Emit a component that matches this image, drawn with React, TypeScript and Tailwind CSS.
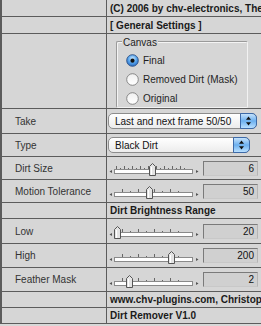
import type { ReactNode } from 'react';

const font = { fontFamily: '"Liberation Sans", Arial, sans-serif' };

interface RowProps {
  label?: string;
  h: string;
  children?: ReactNode;
}

const Row = ({ label, h, children }: RowProps) => (
  <div className={`flex ${h} border-b border-[#5c5c5c]`}>
    <div className="flex w-[105px] shrink-0 items-center border-r border-[#5c5c5c] pl-[13px] text-[10px] text-[#333]">
      {label}
    </div>
    <div className="flex min-w-0 flex-1 items-center">{children}</div>
  </div>
);

const HeaderRow = ({ text, h }: { text: string; h: string }) => (
  <Row h={h}>
    <span className="whitespace-nowrap pl-[3px] text-[10px] font-bold text-[#1a1a1a]">{text}</span>
  </Row>
);

const Radio = ({ checked, label }: { checked?: boolean; label: string }) => (
  <div className="flex items-center gap-[4px]">
    <svg width="13" height="13" viewBox="0 0 13 13">
      <defs>
        <radialGradient id="rb" cx="50%" cy="35%" r="70%">
          <stop offset="0" stopColor="#d4ecff" />
          <stop offset="0.5" stopColor="#5aa7ee" />
          <stop offset="1" stopColor="#1f5fb8" />
        </radialGradient>
        <linearGradient id="rw" x1="0" y1="0" x2="0" y2="1">
          <stop offset="0" stopColor="#f0f0f0" />
          <stop offset="1" stopColor="#ffffff" />
        </linearGradient>
      </defs>
      <circle
        cx="6.5"
        cy="6.5"
        r="5.8"
        fill={checked ? 'url(#rb)' : 'url(#rw)'}
        stroke={checked ? '#2a4f86' : '#7e7e7e'}
        strokeWidth="0.9"
      />
      {checked && <circle cx="6.5" cy="6.7" r="2.1" fill="#111" />}
    </svg>
    <span className="text-[10px] text-[#1e1e1e]">{label}</span>
  </div>
);

const Popup = ({ text, w }: { text: string; w: string }) => (
  <div
    className={`relative flex h-[16px] ${w} items-center rounded-[5px] border border-[#8c8c8c] bg-gradient-to-b from-white to-[#ececec] pl-[6px] text-[10px] text-[#111]`}
  >
    <span className="whitespace-nowrap">{text}</span>
    <div className="absolute top-[-1px] right-[-1px] flex h-[16px] w-[17px] items-center justify-center rounded-r-[5px] border border-[#3d6aa8] bg-gradient-to-b from-[#c5e2fb] via-[#6cb0ef] to-[#b9e0ff]">
      <svg width="7" height="10" viewBox="0 0 7 10">
        <path d="M3.5 0.5 L6 3.8 L1 3.8 Z" fill="#111" />
        <path d="M3.5 9.5 L6 6.2 L1 6.2 Z" fill="#111" />
      </svg>
    </div>
  </div>
);

const Slider = ({ pos, ticks }: { pos: number; ticks: number[] }) => (
  <svg width="95" height="18" viewBox="0 0 95 18" className="shrink-0">
    <path d="M4 11 L1.5 12.5 L4 14 Z" fill="#555" />
    {ticks.map((t, i) => (
      <line
        key={i}
        x1={t + 0.5}
        x2={t + 0.5}
        y1={i % 2 === 0 ? 7 : 9}
        y2="11"
        stroke="#666"
        strokeWidth="1"
      />
    ))}
    <rect x="6.5" y="10.5" width="78" height="4" fill="#fff" stroke="#8a8a8a" strokeWidth="1" />
    <path d="M88 11 L90.5 12.5 L88 14 Z" fill="#555" />
    <path
      d={`M${pos + 0.5} 4.5 L${pos + 3.5} 7.5 L${pos + 3.5} 16.5 L${pos - 2.5} 16.5 L${pos - 2.5} 7.5 Z`}
      fill="#e4e4e4"
      stroke="#555"
      strokeWidth="1"
    />
    <line x1={pos - 0.5} y1="8" x2={pos - 0.5} y2="16" stroke="#fff" strokeWidth="1" />
  </svg>
);

const NumField = ({ value }: { value: string }) => (
  <div className="flex h-[15px] w-[55px] items-center justify-end border border-t-[#7a7a7a] border-l-[#7a7a7a] border-r-[#b5b5b5] border-b-[#c8c8c8] bg-[#d0d0d0] pr-[3px] text-[10px] text-[#111]">
    {value}
  </div>
);

const SliderRow = ({
  label,
  h,
  pos,
  ticks,
  value,
}: {
  label: string;
  h: string;
  pos: number;
  ticks: number[];
  value: string;
}) => (
  <Row label={label} h={h}>
    <div className="flex items-center pl-[1px]">
      <Slider pos={pos} ticks={ticks} />
      <NumField value={value} />
    </div>
  </Row>
);

const fineTicks = [8, 12, 16, 20, 24, 28, 32, 36, 40, 44, 48, 52, 56, 60, 64, 68, 72, 76];
const wideTicks = [14, 22, 30, 38, 46, 54, 62, 70];

export default function App() {
  return (
    <div className="h-[326px] w-[261px] overflow-hidden bg-[#d8d8d8]" style={font}>
      <div className="border-l-2 border-[#5c5c5c] bg-[#d6d6d6]">
        <HeaderRow h="h-[17px]" text="(C) 2006 by chv-electronics, The Netherlands" />
        <HeaderRow h="h-[17px]" text="[ General Settings ]" />
        <Row h="h-[75px]">
          <div className="relative ml-[9px] mt-[6px] h-[67px] w-[132px] rounded-[2px] border border-t-[#9a9a9a] border-l-[#9a9a9a] border-r-[#f2f2f2] border-b-[#f2f2f2] shadow-[inset_1px_1px_0_#f4f4f4]">
            <span className="absolute top-[-7px] left-[5px] bg-[#d6d6d6] px-[1px] text-[10px] text-[#1e1e1e]">
              Canvas
            </span>
            <div className="flex flex-col gap-[4px] pt-[11px] pl-[9px]">
              <Radio checked label="Final" />
              <Radio label="Removed Dirt (Mask)" />
              <Radio label="Original" />
            </div>
          </div>
        </Row>
        <Row label="Take" h="h-[25px]">
          <div className="pl-[1px]">
            <Popup text="Last and next frame 50/50" w="w-[149px]" />
          </div>
        </Row>
        <Row label="Type" h="h-[23px]">
          <div className="pl-[1px]">
            <Popup text="Black Dirt" w="w-[142px]" />
          </div>
        </Row>
        <SliderRow label="Dirt Size" h="h-[23px]" pos={44} ticks={fineTicks} value="6" />
        <SliderRow label="Motion Tolerance" h="h-[23px]" pos={41} ticks={wideTicks} value="50" />
        <HeaderRow h="h-[16px]" text="Dirt Brightness Range" />
        <SliderRow label="Low" h="h-[25px]" pos={9} ticks={wideTicks} value="20" />
        <SliderRow label="High" h="h-[24px]" pos={63} ticks={wideTicks} value="200" />
        <SliderRow label="Feather Mask" h="h-[24px]" pos={21} ticks={wideTicks} value="2" />
        <HeaderRow h="h-[16px]" text="www.chv-plugins.com, Christoph Vonrhein" />
        <HeaderRow h="h-[16px]" text="Dirt Remover V1.0" />
      </div>
    </div>
  );
}
